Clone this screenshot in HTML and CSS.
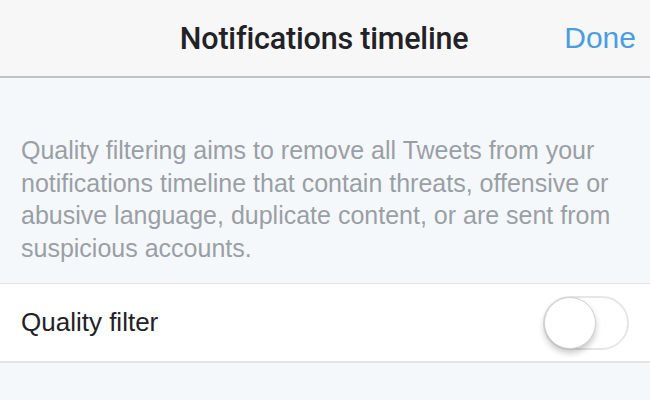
FILE: index.html
```html
<!DOCTYPE html>
<html lang="en">
<head>
    <meta charset="UTF-8">
    <meta name="viewport" content="width=device-width, initial-scale=1.0">
    <title>Notifications timeline</title>
    <link rel="stylesheet" href="styles.css">
</head>
<body>
    <div class="nav-bar">
        <span class="nav-spacer"></span>
        <h1 class="nav-title">Notifications timeline</h1>
        <a class="nav-done" href="#">Done</a>
    </div>
    <div class="content">
        <p class="note">Quality filtering aims to remove all Tweets from your notifications timeline that contain threats, offensive or abusive language, duplicate content, or are sent from suspicious accounts.</p>
        <div class="setting-row">
            <span class="setting-label">Quality filter</span>
            <label class="switch">
                <input type="checkbox">
                <span class="knob"></span>
            </label>
        </div>
    </div>
</body>
</html>
```

FILE: styles.css
```css
body {
    margin: 0;
    font-family: "Liberation Sans", Arial, sans-serif;
    background-color: #f5f8fb;
    height: 400px;
    overflow: hidden;
}

.nav-bar {
    height: 76px;
    display: flex;
    align-items: center;
    justify-content: space-between;
    padding: 0 14px 0 0;
    background-color: #f7f7f7;
    border-bottom: 2px solid #c2c2c2;
}

.nav-spacer {
    width: 84px;
}

.nav-title {
    margin: 0;
    font-family: Roboto, "Liberation Sans", sans-serif;
    font-size: 30.5px;
    font-weight: 500;
    color: #222226;
    letter-spacing: -0.2px;
}

.nav-done {
    font-size: 30px;
    color: #4a9ee0;
    text-decoration: none;
}

.content {
    padding-top: 56px;
}

.note {
    margin: 0 0 19px;
    padding: 0 21px;
    font-size: 25px;
    line-height: 32.5px;
    color: #9a9fa6;
}

.setting-row {
    height: 77px;
    display: flex;
    align-items: center;
    justify-content: space-between;
    padding: 0 21px 0 21px;
    background-color: #fff;
    border-top: 1px solid #e2e5e8;
    border-bottom: 2px solid #e2e5e8;
}

.setting-label {
    font-size: 26px;
    color: #222226;
}

.switch {
    position: relative;
    width: 86px;
    height: 54px;
    box-sizing: border-box;
    border: 2px solid #e6e6e6;
    border-radius: 27px;
    background-color: #fff;
}

.switch input {
    display: none;
}

.knob {
    position: absolute;
    top: -1px;
    left: -1px;
    width: 50px;
    height: 50px;
    border-radius: 50%;
    background-color: #fff;
    border: 1px solid #d2d2d2;
    box-shadow: 0 4px 6px rgba(0, 0, 0, 0.22);
}
```
